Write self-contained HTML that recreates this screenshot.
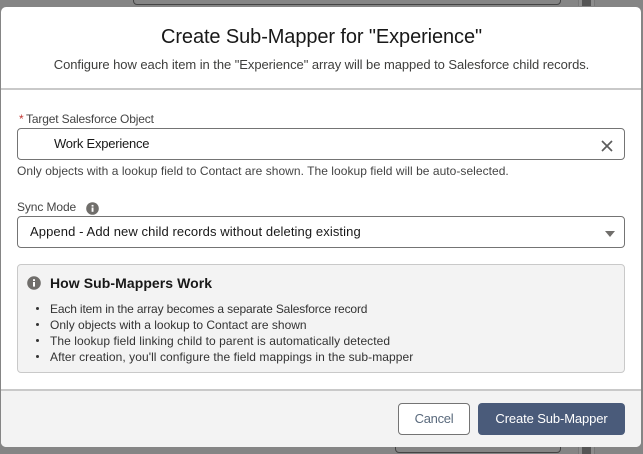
<!DOCTYPE html>
<html><head><meta charset="utf-8"><style>
html,body{margin:0;padding:0}
body{width:643px;height:454px;overflow:hidden;background:#858585;position:relative;font-family:"Liberation Sans",sans-serif;color:#181818}
.a{position:absolute;white-space:nowrap}
.box{position:absolute;box-sizing:border-box;border-radius:4px}
</style></head><body>
<div class="box" style="left:133px;top:-20px;width:428px;height:25px;border:1px solid #444"></div>
<div class="box" style="left:395px;top:430px;width:166px;height:23px;border:1px solid #444"></div>
<div class="a" style="left:578px;top:0;width:15px;height:6px;background:#8c8c8c;border-left:1px solid #777;border-right:1px solid #777"></div>
<div class="a" style="left:578px;top:447px;width:15px;height:7px;background:#8c8c8c;border-left:1px solid #777;border-right:1px solid #777"></div>
<div class="a" style="left:582px;top:0;width:9px;height:6px;background:#555"></div>
<div class="a" style="left:582px;top:447px;width:9px;height:7px;background:#555"></div>

<div class="box" style="left:1px;top:7px;width:640px;height:440px;background:#fff;border-radius:5px;overflow:hidden">
  <div class="a" style="left:0;top:81px;width:640px;height:2px;background:#c9c9c9"></div>
  <div class="a" style="left:0;top:382px;width:640px;height:58px;background:#f3f3f3;border-top:2px solid #c9c9c9;box-sizing:border-box"></div>
</div>

<div class="a" style="left:0;width:643px;text-align:center;top:25px;font-size:20px;line-height:24px;letter-spacing:-.1px;color:#181818">Create Sub-Mapper for "Experience"</div>
<div class="a" style="left:0;width:643px;text-align:center;top:57px;font-size:13px;line-height:16px;letter-spacing:-.06px;color:#3e3e3c">Configure how each item in the "Experience" array will be mapped to Salesforce child records.</div>

<div class="a" style="left:19px;top:111px;font-size:12px;line-height:16px;color:#c23934">*</div>
<div class="a" style="left:26px;top:111px;font-size:12px;line-height:16px;letter-spacing:-.15px;color:#444">Target Salesforce Object</div>
<div class="box" style="left:17px;top:128px;width:608px;height:32px;background:#fff;border:1px solid #747474"></div>
<div class="a" style="left:54px;top:136px;font-size:13px;line-height:16px;letter-spacing:-.23px;color:#181818">Work Experience</div>
<svg class="a" style="left:600px;top:139px" width="14" height="14" viewBox="0 0 14 14"><path d="M2 2 L12 12 M12 2 L2 12" stroke="#5c5c5c" stroke-width="1.7" fill="none"/></svg>
<div class="a" style="left:17px;top:163px;font-size:12px;line-height:16px;letter-spacing:.04px;color:#444">Only objects with a lookup field to Contact are shown. The lookup field will be auto-selected.</div>

<div class="a" style="left:17px;top:199px;font-size:12px;line-height:16px;letter-spacing:-.1px;color:#444">Sync Mode</div>
<svg class="a" style="left:86px;top:202px" width="13" height="13" viewBox="0 0 13 13"><circle cx="6.5" cy="6.5" r="6.3" fill="#706e6b"/><rect x="5.6" y="5.5" width="1.9" height="4.3" fill="#fff"/><rect x="5.6" y="2.9" width="1.9" height="1.7" fill="#fff"/></svg>
<div class="box" style="left:17px;top:216px;width:608px;height:32px;background:#fff;border:1px solid #747474"></div>
<div class="a" style="left:30px;top:224px;font-size:13px;line-height:16px;letter-spacing:.1px;color:#181818">Append - Add new child records without deleting existing</div>
<svg class="a" style="left:604px;top:230px" width="12" height="8" viewBox="0 0 12 8"><path d="M1 1 H11 L6 7 Z" fill="#706e6b"/></svg>

<div class="box" style="left:17px;top:264px;width:608px;height:109px;background:#f3f3f3;border:1px solid #c9c9c9"></div>
<svg class="a" style="left:27px;top:276px" width="14" height="14" viewBox="0 0 14 14"><circle cx="7" cy="7" r="6.8" fill="#706e6b"/><rect x="6" y="6" width="2" height="4.6" fill="#fff"/><rect x="6" y="3.2" width="2" height="1.8" fill="#fff"/></svg>
<div class="a" style="left:50px;top:275px;font-size:14px;line-height:17px;font-weight:bold;letter-spacing:.07px;color:#181818">How Sub-Mappers Work</div>
<div class="a" style="left:36px;top:307px;width:3px;height:3px;border-radius:50%;background:#333"></div>
<div class="a" style="left:36px;top:323px;width:3px;height:3px;border-radius:50%;background:#333"></div>
<div class="a" style="left:36px;top:339px;width:3px;height:3px;border-radius:50%;background:#333"></div>
<div class="a" style="left:36px;top:355px;width:3px;height:3px;border-radius:50%;background:#333"></div>
<div class="a" style="left:50px;top:301px;font-size:12px;line-height:16px;letter-spacing:-.15px;color:#333">Each item in the array becomes a separate Salesforce record</div>
<div class="a" style="left:50px;top:317px;font-size:12px;line-height:16px;letter-spacing:.01px;color:#333">Only objects with a lookup to Contact are shown</div>
<div class="a" style="left:50px;top:333px;font-size:12px;line-height:16px;letter-spacing:.07px;color:#333">The lookup field linking child to parent is automatically detected</div>
<div class="a" style="left:50px;top:349px;font-size:12px;line-height:16px;letter-spacing:.07px;color:#333">After creation, you'll configure the field mappings in the sub-mapper</div>

<div class="box" style="left:398px;top:403px;width:72px;height:32px;background:#fff;border:1px solid #747474;font-size:13px;line-height:30px;text-align:center;letter-spacing:-.3px;color:#5a6a7d">Cancel</div>
<div class="box" style="left:478px;top:403px;width:147px;height:32px;background:#4a5b7a;font-size:13px;line-height:32px;text-align:center;letter-spacing:-.12px;color:#fff">Create Sub-Mapper</div>
</body></html>
